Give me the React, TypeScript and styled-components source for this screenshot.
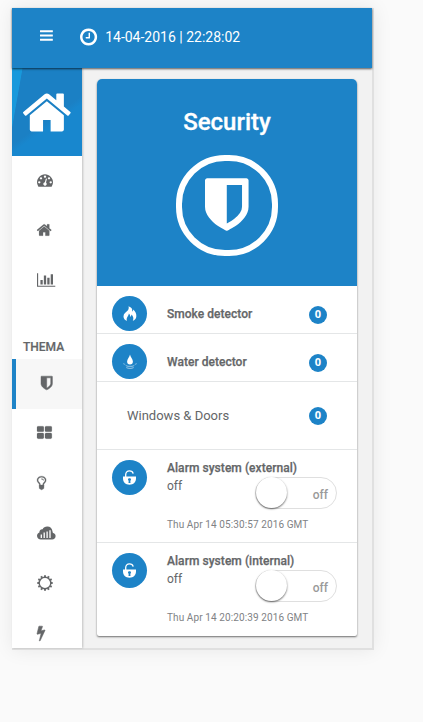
import React from 'react';
import styled, { createGlobalStyle } from 'styled-components';

const BLUE = '#1d83c7';

const GlobalStyle = createGlobalStyle`
  *, *::before, *::after { box-sizing: border-box; }
  html, body { margin: 0; background: #fafafa; }
  body { font-family: Roboto, 'Liberation Sans', sans-serif; color: #646668; overflow: hidden; }
`;

const Page = styled.main`
  width: 423px;
  height: 722px;
  padding: 8px 0 0 12px;
  overflow: hidden;
`;

const Device = styled.div`
  width: 362px;
  height: 642px;
  background: #f2f2f2;
  border-right: 2px solid #e0e0e0;
  border-bottom: 2px solid #e0e0e0;
  box-shadow: 0 0 18px rgba(0, 0, 0, 0.08);
`;

const TopBar = styled.header`
  position: relative;
  height: 60px;
  padding-left: 28px;
  display: flex;
  align-items: center;
  background: ${BLUE};
  color: #fff;
  box-shadow: 0 1px 2px rgba(0, 0, 0, 0.65);
`;

const MenuButton = styled.button`
  border: 0;
  padding: 0;
  margin: 0 27px 5px 0;
  width: 13px;
  height: 15px;
  background: none;
  color: inherit;
  display: flex;
`;

const Clock = styled.time`
  display: flex;
  align-items: center;
  gap: 8px;
  height: 20px;
  margin-top: -2px;
  font-size: 14px;
  line-height: 20px;
  white-space: nowrap;
`;

const Body = styled.div`
  display: flex;
  height: 580px;
`;

const Sidebar = styled.aside`
  width: 70px;
  flex: none;
  overflow: hidden;
  background: #fff;
  box-shadow: 1px 0 2px rgba(0, 0, 0, 0.2);
`;

const Brand = styled.div`
  height: 88px;
  padding-left: 11px;
  display: flex;
  align-items: center;
  color: #fff;
  background:
    linear-gradient(100deg, #1899dc 0 10px, transparent 10.8px),
    linear-gradient(145deg, #1b80c4 0 56%, #1887ce 62%);
`;

const NavItem = styled.a<{ $active?: boolean }>`
  height: 50px;
  display: flex;
  align-items: center;
  padding: 0 0 2px 25px;
  border-left: ${p => (p.$active ? 4 : 0)}px solid ${BLUE};
  background: ${p => (p.$active ? '#f7f7f7' : 'transparent')};
`;

const NavHeading = styled.h2`
  margin: 0;
  height: 53px;
  padding: 31px 0 0 11px;
  font-size: 12px;
  line-height: 20px;
  font-weight: 500;
  -webkit-text-stroke: 0.2px currentColor;
`;

const Content = styled.section`
  flex: 1;
  padding: 11px 15px 12px;
`;

const Card = styled.article`
  height: 557px;
  background: #fff;
  border-radius: 5px 5px 2px 2px;
  box-shadow: 0 1px 2px rgba(0, 0, 0, 0.55);
`;

const CardHead = styled.div`
  height: 207px;
  border-radius: 5px 5px 0 0;
  background: ${BLUE};
  color: #fff;
  display: flex;
  flex-direction: column;
  align-items: center;
`;

const Title = styled.h1`
  margin: 27px 0 17px;
  font-size: 24px;
  line-height: 32px;
  font-weight: 500;
  -webkit-text-stroke: 0.3px currentColor;
`;

const Emblem = styled.div`
  width: 102px;
  height: 101px;
  border: 6px solid #fff;
  border-radius: 49px;
  display: flex;
  align-items: center;
  justify-content: center;
  padding-bottom: 3px;
`;

const Row = styled.div<{ $height: number; $last?: boolean }>`
  height: ${p => p.$height}px;
  padding: 0 30px 0 15px;
  display: flex;
  border-bottom: ${p => (p.$last ? 0 : 1)}px solid #e4e6e7;
`;

const AlarmRow = styled(Row)`
  padding-right: 20px;
`;

const Disc = styled.span`
  flex: none;
  width: 35px;
  height: 35px;
  margin: 10px 20px 0 0;
  border-radius: 50%;
  background: ${BLUE};
  color: #fff;
  display: flex;
  align-items: center;
  justify-content: center;
`;

const Label = styled.span`
  flex: 1;
  font-size: 12px;
  line-height: 18px;
  font-weight: 500;
  letter-spacing: 0.03px;
  -webkit-text-stroke: 0.25px currentColor;
  margin: 19px 0 0;
`;

const PlainLabel = styled.span`
  flex: 1;
  padding-left: 15px;
  font-size: 13px;
  line-height: 67px;
`;

const Badge = styled.span<{ $top: number }>`
  width: 18px;
  height: 18px;
  margin-top: ${p => p.$top}px;
  border-radius: 50%;
  background: ${BLUE};
  color: #fff;
  font: 700 11px/16px 'Open Sans', sans-serif;
  text-align: center;
`;

const Detail = styled.div`
  flex: 1;
  padding-top: 10px;
  white-space: nowrap;
`;

const DetailTitle = styled.div`
  font-size: 12px;
  line-height: 17px;
  font-weight: 500;
  letter-spacing: 0.05px;
  -webkit-text-stroke: 0.25px currentColor;
`;

const StateLine = styled.div`
  display: flex;
  justify-content: space-between;
  height: 39px;
  font-size: 12px;
  line-height: 18px;
`;

const Switch = styled.button`
  width: 82px;
  height: 32px;
  margin: 0;
  padding: 2px 8px 0 0;
  border: 1px solid #dfdfdf;
  border-radius: 16px;
  background: #fff;
  color: #9a9a9a;
  font: 500 12px/30px Roboto, sans-serif;
  display: flex;
  justify-content: space-between;
`;

const Knob = styled.span`
  width: 31px;
  height: 31px;
  margin: -3px 0 0 -0.5px;
  border-radius: 50%;
  background: #fff;
  box-shadow: 0 1px 2px rgba(0, 0, 0, 0.6);
`;

const Stamp = styled.div`
  font-size: 10px;
  line-height: 18px;
  letter-spacing: 0.1px;
  color: #808285;
`;

type GlyphName = keyof typeof glyphs;

const glyphs = {
  bars: { x: 128, w: 1536, d: 'M1664 1344v128q0 26-19 45t-45 19h-1408q-26 0-45-19t-19-45v-128q0-26 19-45t45-19h1408q26 0 45 19t19 45zm0-512v128q0 26-19 45t-45 19h-1408q-26 0-45-19t-19-45v-128q0-26 19-45t45-19h1408q26 0 45 19t19 45zm0-512v128q0 26-19 45t-45 19h-1408q-26 0-45-19t-19-45v-128q0-26 19-45t45-19h1408q26 0 45 19t19 45z' },
  clock: { x: 128, w: 1536, d: 'M1024 544v448q0 14-9 23t-23 9h-320q-14 0-23-9t-9-23v-64q0-14 9-23t23-9h224v-352q0-14 9-23t23-9h64q14 0 23 9t9 23zm416 352q0-148-73-273t-198-198-273-73-273 73-198 198-73 273 73 273 198 198 273 73 273-73 198-198 73-273zm224 0q0 209-103 385.5t-279.5 279.5-385.5 103-385.5-103-279.5-279.5-103-385.5 103-385.5 279.5-279.5 385.5-103 385.5 103 279.5 279.5 103 385.5z' },
  home: { x: 90, w: 1612, d: 'M1472 992v480q0 26-19 45t-45 19h-384v-384h-256v384h-384q-26 0-45-19t-19-45v-480q0-1 .5-3t.5-3l575-474 575 474q1 2 1 6zm223-69l-62 74q-8 9-21 11h-3q-13 0-21-7l-692-577-692 577q-12 8-24 7-13-2-21-11l-62-74q-8-10-7-23.5t11-21.5l719-599q32-26 76-26t76 26l244 204v-195q0-14 9-23t23-9h192q14 0 23 9t9 23v408l219 182q10 8 11 21.5t-7 23.5z' },
  gauge: { x: 0, w: 1792, d: 'M384 1152q0-53-37.5-90.5t-90.5-37.5-90.5 37.5-37.5 90.5 37.5 90.5 90.5 37.5 90.5-37.5 37.5-90.5zm192-448q0-53-37.5-90.5t-90.5-37.5-90.5 37.5-37.5 90.5 37.5 90.5 90.5 37.5 90.5-37.5 37.5-90.5zm428 481l101-382q6-26-7.5-48.5t-38.5-29.5-48 6.5-30 39.5l-101 382q-60 5-107 43.5t-63 98.5q-20 77 20 146t117 89 146-20 89-117q16-60-6-117t-72-91zm660-33q0-53-37.5-90.5t-90.5-37.5-90.5 37.5-37.5 90.5 37.5 90.5 90.5 37.5 90.5-37.5 37.5-90.5zm-640-640q0-53-37.5-90.5t-90.5-37.5-90.5 37.5-37.5 90.5 37.5 90.5 90.5 37.5 90.5-37.5 37.5-90.5zm448 192q0-53-37.5-90.5t-90.5-37.5-90.5 37.5-37.5 90.5 37.5 90.5 90.5 37.5 90.5-37.5 37.5-90.5zm320 448q0 261-141 483-19 29-54 29h-1402q-35 0-54-29-141-221-141-483 0-182 71-348t191-286 286-191 348-71 348 71 286 191 191 286 71 348z' },
  chart: { x: 0, w: 2048, d: 'M640 896v512h-256v-512h256zm384-512v1024h-256v-1024h256zm1024 1152v128h-2048v-1536h128v1408h1920zm-640-896v768h-256v-768h256zm384-384v1152h-256v-1152h256z' },
  shield: { x: 256, w: 1280, d: 'M1344 960v-640h-448v1137q119-63 213-137 235-184 235-360zm192-768v768q0 86-33.5 170.5t-83 150-118 127.5-126.5 103-121 77.5-89.5 49.5-42.5 20q-12 6-26 6t-26-6q-16-7-42.5-20t-89.5-49.5-121-77.5-126.5-103-118-127.5-83-150-33.5-170.5v-768q0-26 19-45t45-19h1152q26 0 45 19t19 45z' },
  tiles: { x: 64, w: 1664, d: 'M832 1024v384q0 52-38 90t-90 38h-512q-52 0-90-38t-38-90v-384q0-52 38-90t90-38h512q52 0 90 38t38 90zm0-768v384q0 52-38 90t-90 38h-512q-52 0-90-38t-38-90v-384q0-52 38-90t90-38h512q52 0 90 38t38 90zm896 768v384q0 52-38 90t-90 38h-512q-52 0-90-38t-38-90v-384q0-52 38-90t90-38h512q52 0 90 38t38 90zm0-768v384q0 52-38 90t-90 38h-512q-52 0-90-38t-38-90v-384q0-52 38-90t90-38h512q52 0 90 38t38 90z' },
  bulb: { x: 384, w: 1024, d: 'M1120 576q0 13-9.5 22.5t-22.5 9.5-22.5-9.5-9.5-22.5q0-46-54-71t-106-25q-13 0-22.5-9.5t-9.5-22.5 9.5-22.5 22.5-9.5q50 0 99.5 16t87 54 37.5 90zm160 0q0-72-34.5-134t-90-101.5-123-62-136.5-22.5-136.5 22.5-123 62-90 101.5-34.5 134q0 101 68 180 10 11 30.5 33t30.5 33q128 153 141 298h228q13-145 141-298 10-11 30.5-33t30.5-33q68-79 68-180zm128 0q0 155-103 268-45 49-74.5 87t-59.5 95.5-34 107.5q47 28 47 82 0 37-25 64 25 27 25 64 0 52-45 81 13 23 13 47 0 46-31.5 71t-77.5 25q-20 44-60 70t-87 26-87-26-60-70q-46 0-77.5-25t-31.5-71q0-24 13-47-45-29-45-81 0-37 25-64-25-27-25-64 0-54 47-82-4-50-34-107.5t-59.5-95.5-74.5-87q-103-113-103-268 0-99 44.5-184.5t117-142 164-89 186.5-32.5 186.5 32.5 164 89 117 142 44.5 184.5z' },
  bolt: { x: 448, w: 896, d: 'M1333 566q18 20 7 44l-540 1157q-13 25-42 25-4 0-14-2-17-5-25.5-19t-4.5-30l197-808-406 101q-4 1-12 1-18 0-31-11-18-15-13-39l201-825q4-14 16-23t28-9h328q19 0 32 12.5t13 29.5q0 8-5 18l-171 463 396-98q8-2 12-2 19 0 34 15z' },
};

const Glyph = ({ name, size = 16, weight = 0 }: { name: GlyphName; size?: number; weight?: number }) => {
  const g = glyphs[name];
  return (
    <svg
      width={(g.w / 1792) * size}
      height={size}
      viewBox={`${g.x} 0 ${g.w} 1792`}
      fill="currentColor"
      stroke="currentColor"
      strokeWidth={weight}
      overflow="visible"
      aria-hidden="true"
    >
      <path d={g.d} />
    </svg>
  );
};

const CloudChart = () => (
  <svg width="19" height="14" viewBox="0 0 19 14" aria-hidden="true">
    <path fill="currentColor" d="M4 13.5C1.7 13.5 0 12 0 9.8 0 8.1 1 6.9 2.4 6.4 2.2 4.5 3.6 3.1 5.6 3.3 6.4 1.4 8.3.4 10.4.5c2.8 0 4.7 2 5 4.4.3 1.1.4 1.5.6 2 1.4.1 2.6 1.3 2.6 3.1 0 2-1.5 3.5-3.5 3.5z" />
    <path stroke="#fff" strokeWidth="1.3" d="M4.3 12V8.5M7.2 12V6.6M10.1 12V5.6M13 12V4.2" />
  </svg>
);

const SunRing = () => (
  <svg width="16" height="16" viewBox="0 0 16 16" aria-hidden="true">
    <circle cx="8" cy="8" r="5.8" fill="none" stroke="currentColor" strokeWidth="1.4" />
    <g stroke="currentColor" strokeWidth="1.9">
      {Array.from({ length: 12 }, (_, i) => (
        <path key={i} d="M8 .3V2" transform={`rotate(${i * 30} 8 8)`} />
      ))}
    </g>
  </svg>
);

const Flame = () => (
  <svg width="14" height="15" viewBox="0 0 14 15" fill="currentColor" aria-hidden="true">
    <path d="M5.5.2C8.6 1.2 9.6 3.1 9.2 5.4 10 5 10.2 4.2 10.1 3.4 12.4 5.3 13.7 8 13.3 10.7 13 12.8 11.7 14.1 9.8 14.8 11 12.6 10.3 10.2 8.3 8.6 8.4 9.8 8 10.5 7.3 10.8 7.2 9.3 6.6 8.2 5.8 7.5 5.9 9.1 4.8 10 4.1 11.4 3.4 12.8 3.6 13.9 4.3 14.8 1.8 14.2.4 12.4.5 10.2.6 7.4 3.2 6.3 4.5 4.8 5.8 3.2 6 1.7 5.5.2z" />
  </svg>
);

const Droplet = () => (
  <svg width="14" height="16" viewBox="0 0 14 16" aria-hidden="true">
    <path fill="currentColor" d="M7 .5C7.3 2.9 9.9 5.2 9.9 7.6a2.9 2.9 0 0 1-5.8 0C4.1 5.2 6.7 2.9 7 .5z" />
    <g fill="none" stroke="currentColor" strokeWidth=".9" opacity=".6">
      <path d="M2.6 11.2c.6.6 1.4.9 2.4 1.1h4c1-.2 1.8-.5 2.4-1.1M3.3 13.6c1 .5 2.3.8 3.7.8s2.7-.3 3.7-.8M.4 9.7l1.4.6M13.6 9.7l-1.4.6" />
    </g>
  </svg>
);

const OpenLock = () => (
  <svg width="13" height="15" viewBox="0 0 13 15" aria-hidden="true">
    <path fill="none" stroke="currentColor" strokeWidth="1.3" d="M2.7 8V4.8C2.7 2.3 4.3.9 6.4.9c1.9 0 3.4 1 3.8 2.8" />
    <path fill="currentColor" fillRule="evenodd" d="M0 6.5h13v2c0 3.7-2.5 6.2-6.5 6.2S0 12.2 0 8.5zM5 9.5c0 .6.3 1 .7 1.3L5.5 13h2l-.2-2.2c.4-.3.7-.7.7-1.3 0-.8-.7-1.3-1.5-1.3S5 8.7 5 9.5z" />
  </svg>
);

const detectors = [
  { name: 'Smoke detector', icon: <Flame /> },
  { name: 'Water detector', icon: <Droplet /> },
];

const alarms = [
  { name: 'Alarm system (external)', stamp: 'Thu Apr 14 05:30:57 2016 GMT' },
  { name: 'Alarm system (internal)', stamp: 'Thu Apr 14 20:20:39 2016 GMT' },
];

export default function App() {
  return (
    <>
      <GlobalStyle />
      <Page>
        <Device>
          <TopBar>
            <MenuButton aria-label="Menu"><Glyph name="bars" size={15} /></MenuButton>
            <Clock><Glyph name="clock" size={20} />14-04-2016 | 22:28:02</Clock>
          </TopBar>
          <Body>
            <Sidebar>
              <Brand><Glyph name="home" size={53} /></Brand>
              <nav>
                <NavItem><Glyph name="gauge" /></NavItem>
                <NavItem><Glyph name="home" weight={20} /></NavItem>
                <NavItem><Glyph name="chart" /></NavItem>
                <NavHeading>THEMA</NavHeading>
                <NavItem $active><Glyph name="shield" weight={50} /></NavItem>
                <NavItem><Glyph name="tiles" weight={20} /></NavItem>
                <NavItem><Glyph name="bulb" weight={30} /></NavItem>
                <NavItem><CloudChart /></NavItem>
                <NavItem><SunRing /></NavItem>
                <NavItem><Glyph name="bolt" weight={60} /></NavItem>
              </nav>
            </Sidebar>
            <Content>
              <Card>
                <CardHead>
                  <Title>Security</Title>
                  <Emblem><Glyph name="shield" size={61} /></Emblem>
                </CardHead>
                {detectors.map(d => (
                  <Row key={d.name} $height={48}>
                    <Disc>{d.icon}</Disc>
                    <Label>{d.name}</Label>
                    <Badge $top={20}>0</Badge>
                  </Row>
                ))}
                <Row $height={68}>
                  <PlainLabel>Windows &amp; Doors</PlainLabel>
                  <Badge $top={25}>0</Badge>
                </Row>
                {alarms.map((a, i) => (
                  <AlarmRow key={a.name} $height={93} $last={i === alarms.length - 1}>
                    <Disc><OpenLock /></Disc>
                    <Detail>
                      <DetailTitle>{a.name}</DetailTitle>
                      <StateLine>
                        <span>off</span>
                        <Switch role="switch" aria-checked="false"><Knob />off</Switch>
                      </StateLine>
                      <Stamp>{a.stamp}</Stamp>
                    </Detail>
                  </AlarmRow>
                ))}
              </Card>
            </Content>
          </Body>
        </Device>
      </Page>
    </>
  );
}
